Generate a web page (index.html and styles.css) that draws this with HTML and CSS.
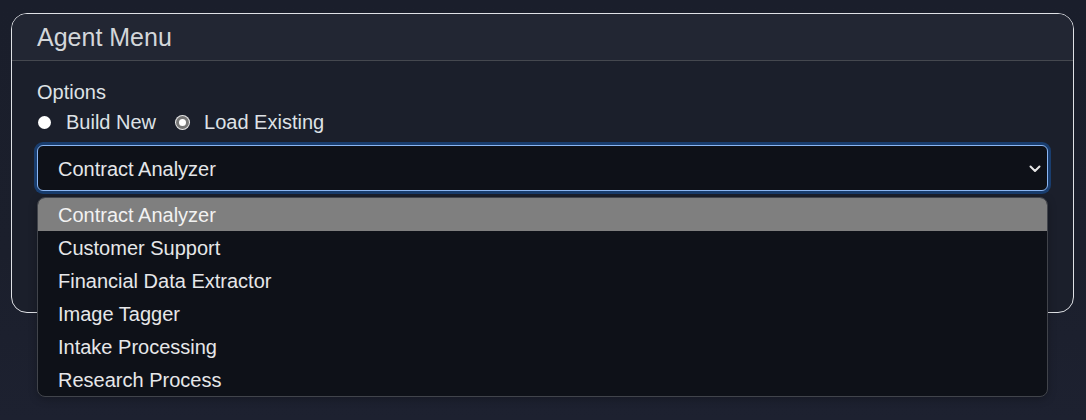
FILE: index.html
```html
<!DOCTYPE html>
<html lang="en">
<head>
<meta charset="utf-8">
<title>Agent Menu</title>
<link rel="stylesheet" href="styles.css">
</head>
<body>
  <div class="card">
    <div class="card-header">Agent Menu</div>
    <div class="card-body">
      <div class="label">Options</div>
      <div class="radios">
        <label class="radio"><span class="dot"></span>Build New</label>
        <label class="radio checked"><span class="dot"></span>Load Existing</label>
      </div>
      <div class="select-wrap">
        <div class="select">
          <span>Contract Analyzer</span>
          <svg class="chev" width="12" height="8" viewBox="0 0 12 8"><path d="M1.5 1.5 L6 6 L10.5 1.5" fill="none" stroke="#e6e6e6" stroke-width="2" stroke-linecap="round" stroke-linejoin="round"/></svg>
        </div>
        <ul class="dropdown">
          <li class="active">Contract Analyzer</li>
          <li>Customer Support</li>
          <li>Financial Data Extractor</li>
          <li>Image Tagger</li>
          <li>Intake Processing</li>
          <li>Research Process</li>
        </ul>
      </div>
    </div>
  </div>
</body>
</html>
```

FILE: styles.css
```css
html, body {
  margin: 0;
  padding: 0;
}
body {
  width: 1086px;
  height: 420px;
  background: linear-gradient(180deg, #1a1e2b 0%, #1b1f2c 60%, #1d2130 100%);
  font-family: "Liberation Sans", Arial, sans-serif;
  font-size: 20px;
  color: #dee2e6;
  overflow: hidden;
}
.card {
  margin: 13px 12px 0 11px;
  height: 300px;
  box-sizing: border-box;
  border: 1px solid #dfe1e6;
  border-radius: 16px;
  background: #1b1f2b;
  overflow: visible;
}
.card-header {
  background: #222633;
  border-radius: 15px 15px 0 0;
  border-bottom: 1px solid #45484f;
  padding: 8px 25px;
  height: 30px;
  line-height: 30px;
  font-size: 25px;
  color: #d3d6da;
}
.card-body {
  padding: 16px 25px 0 25px;
}
.label {
  line-height: 30px;
}
.radios {
  display: flex;
  align-items: center;
  height: 30px;
  gap: 19px;
}
.radio {
  display: flex;
  align-items: center;
  gap: 15px;
  line-height: 30px;
}
.dot {
  width: 13px;
  height: 13px;
  border-radius: 50%;
  background: #ffffff;
  box-sizing: border-box;
  margin-left: 1px;
}
.radio.checked .dot {
  background: #ffffff;
  border: 3px solid #767676;
  box-shadow: 0 0 0 1px #e8e8e8;
}
.select-wrap {
  position: relative;
  margin-top: 8px;
}
.select {
  display: flex;
  align-items: center;
  justify-content: space-between;
  height: 46px;
  box-sizing: border-box;
  padding: 1px 6px 0 20px;
  background: #0e1118;
  border: 1px solid #8bb6f3;
  border-radius: 6px;
  box-shadow: 0 0 0 3px #193d6e;
  color: #e4e6e9;
  line-height: 30px;
}
.chev {
  display: block;
}
.dropdown {
  position: absolute;
  left: 0;
  top: 52px;
  width: 1009px;
  margin: 0;
  padding: 0;
  list-style: none;
  background: #0e1118;
  border: 1px solid #41444b;
  border-radius: 8px;
  overflow: hidden;
  box-shadow: 0 2px 8px rgba(0, 0, 0, 0.25);
}
.dropdown li {
  height: 31px;
  padding-top: 2px;
  line-height: 31px;
  padding-left: 20px;
  color: #e6e7e9;
}
.dropdown li.active {
  background: #7f7f7f;
  color: #f2f2f2;
}
```
